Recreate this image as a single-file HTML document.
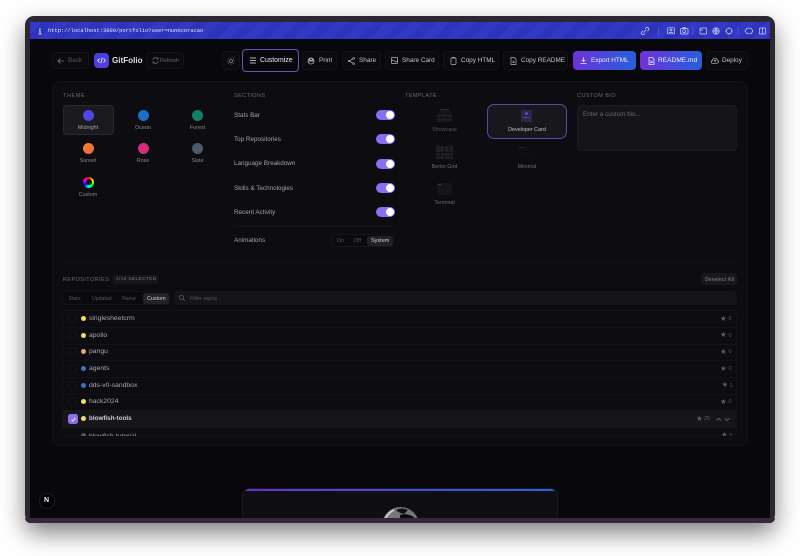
<!DOCTYPE html>
<html><head><meta charset="utf-8"><style>
html,body{margin:0;padding:0;width:800px;height:556px;overflow:hidden;background:#fff}
*{box-sizing:border-box}
body{font-family:"Liberation Sans",sans-serif;position:relative}
.a{position:absolute}
.t{position:absolute;white-space:nowrap;line-height:10px;height:10px;margin-top:1px}
.frame{position:absolute;left:25px;top:16px;width:750px;height:506.5px;border-radius:9px;background:#2c2733;box-shadow:0 10px 24px rgba(0,0,0,.5)}
.frame:after{content:"";position:absolute;left:0;right:0;bottom:0;height:5px;background:#37283f;border-radius:0 0 9px 9px}
.screen{position:absolute;left:30px;top:22px;width:740px;height:496px;background:#08080c;overflow:hidden;z-index:2}
.s{position:absolute;left:-30px;top:-22px;width:800px;height:556px}
.bar{position:absolute;left:30px;top:22px;width:740px;height:17px;background:repeating-linear-gradient(135deg,#3239c4 0 9px,#2d34bb 9px 18px)}
.btn{position:absolute;border:1px solid #131318;border-radius:4px;background:#0b0b0f;top:51px;height:19px}
.lb{font-size:6.4px;color:#c4c4c8}
.grad{position:absolute;top:51px;height:19px;border-radius:4px;background:linear-gradient(90deg,#6d32d8,#2460dc)}
.h{font-size:5.5px;letter-spacing:.42px;color:#6a6a72}
.dot{position:absolute;width:11px;height:11px;border-radius:50%}
.cap{position:absolute;width:50px;text-align:center;font-size:5.4px;color:#86868c;line-height:8px;margin-top:.5px}
.sec{font-size:6.3px;color:#a2a2a8}
.tg{position:absolute;left:376px;width:19px;height:10px;border-radius:5px;background:#8b6ff0}
.tg:after{content:"";position:absolute;right:1px;top:1px;width:8px;height:8px;border-radius:50%;background:#fff}
.thumb{position:absolute;background:#17171b}
.row{position:absolute;left:62px;width:675px;height:1px;background:#131317}
.cb{position:absolute;left:68px;width:9px;height:9px;border-radius:50%;border:1px solid #17171c}
.d{position:absolute;left:81px;width:5px;height:5px;border-radius:50%}
.name{font-size:6.8px;color:#a8a8ac;left:89px}
.cnt{font-size:5.4px;color:#5a5a60}
.st{font-size:7.5px;color:#5a5a60;margin-top:0}
svg{position:absolute;overflow:visible}
</style></head><body>
<div class="frame"></div>
<div class="screen"><div class="s">

<!-- toolbar -->
<div class="btn" style="left:52px;top:52px;width:37px;height:17px"></div>
<svg style="left:57px;top:57px" width="8" height="8" viewBox="0 0 8 8" fill="none" stroke="#77777d" stroke-width=".8"><path d="M7 4H1M3.5 1.5L1 4l2.5 2.5"/></svg>
<div class="t lb" style="left:68px;top:55px;color:#55555b">Back</div>
<div class="a" style="left:94px;top:53px;width:15px;height:15px;border-radius:4px;background:linear-gradient(135deg,#3f3fe0,#5a3de0)"></div>
<svg style="left:97px;top:57px" width="9" height="7" viewBox="0 0 9 7" fill="none" stroke="#fff" stroke-width=".8"><path d="M2.5 1.5L.7 3.5l1.8 2M6.5 1.5l1.8 2-1.8 2M5.2.8L3.8 6.2"/></svg>
<div class="t" style="left:112px;top:54.5px;font-size:8.1px;font-weight:bold;color:#dcdce0">GitFolio</div>
<div class="btn" style="left:146px;top:52px;width:38px;height:17px"></div>
<svg style="left:152px;top:57px" width="7" height="7" viewBox="0 0 7 7" fill="none" stroke="#77777d" stroke-width=".7"><path d="M.8 3A2.8 2.8 0 0 1 6 2M6.2 4A2.8 2.8 0 0 1 1 5M6 .6V2H4.6M1 6.4V5h1.4"/></svg>
<div class="t" style="left:160px;top:54.5px;font-size:5.4px;color:#66666c">Refresh</div>

<div class="btn" style="left:222px;width:18px"></div>
<svg style="left:227px;top:56.5px" width="8" height="8" viewBox="0 0 8 8" fill="none" stroke="#8a8a90" stroke-width=".7"><circle cx="4" cy="4" r="1.5"/><path d="M4 .3v1M4 6.7v1M.3 4h1M6.7 4h1M1.4 1.4l.7.7M5.9 5.9l.7.7M1.4 6.6l.7-.7M5.9 2.1l.7-.7"/></svg>

<div class="a" style="left:242px;top:49px;width:57px;height:23px;border:1px solid #6b55b5;border-radius:4px;background:#08080c"></div>
<svg style="left:250px;top:57px" width="6" height="7" viewBox="0 0 6 7" stroke="#eee" stroke-width=".8"><path d="M0 1h6M0 3.5h6M0 6h6"/></svg>
<div class="t lb" style="left:260px;top:55px;color:#ececf0;font-size:6.9px">Customize</div>

<div class="btn" style="left:302px;width:35px"></div>
<svg style="left:307px;top:56.5px" width="8" height="8" viewBox="0 0 8 8" fill="none" stroke="#b5b5ba" stroke-width=".8"><circle cx="4" cy="4" r="3"/><path d="M1 4h6M2.5 1.5h3v1.8h-3z"/></svg>
<div class="t lb" style="left:319px;top:55px">Print</div>
<div class="btn" style="left:342px;width:39px"></div>
<svg style="left:348px;top:56.5px" width="7" height="8" viewBox="0 0 7 8" fill="none" stroke="#b5b5ba" stroke-width=".7"><circle cx="1.2" cy="4" r=".8"/><circle cx="5.6" cy="1.4" r=".8"/><circle cx="5.6" cy="6.6" r=".8"/><path d="M1.9 3.6l3-1.8M1.9 4.4l3 1.8"/></svg>
<div class="t lb" style="left:359px;top:55px">Share</div>
<div class="btn" style="left:385px;width:54px"></div>
<svg style="left:391px;top:57px" width="7" height="7" viewBox="0 0 7 7" fill="none" stroke="#b5b5ba" stroke-width=".7"><rect x=".4" y=".4" width="6.2" height="6.2" rx=".8"/><path d="M.5 4.2l1.8-1.3L4.5 5l2-1.2"/></svg>
<div class="t lb" style="left:402px;top:55px">Share Card</div>
<div class="btn" style="left:443px;width:56px"></div>
<svg style="left:450px;top:56.5px" width="7" height="8" viewBox="0 0 7 8" fill="none" stroke="#b5b5ba" stroke-width=".7"><rect x="1" y="1" width="5" height="6.5" rx=".7"/><path d="M2.4 1V.4h2.2V1"/></svg>
<div class="t lb" style="left:461px;top:55px">Copy HTML</div>
<div class="btn" style="left:503px;width:65px"></div>
<svg style="left:510px;top:56.5px" width="7" height="8" viewBox="0 0 7 8" fill="none" stroke="#b5b5ba" stroke-width=".7"><path d="M1 .5h3.3L6 2.2v5.3H1zM2.3 4.2h2.4M2.3 5.7h2.4"/></svg>
<div class="t lb" style="left:521px;top:55px">Copy README</div>

<div class="grad" style="left:573px;width:63px"></div>
<svg style="left:580px;top:57px" width="7" height="7" viewBox="0 0 7 7" fill="none" stroke="#eee" stroke-width=".8"><path d="M3.5.3v4M1.8 3l1.7 1.6L5.2 3M.5 6.4h6"/></svg>
<div class="t lb" style="left:591px;top:55px;color:#f0f0f5">Export HTML</div>
<div class="grad" style="left:640px;width:62px"></div>
<svg style="left:648px;top:56.5px" width="7" height="8" viewBox="0 0 7 8" fill="none" stroke="#eee" stroke-width=".8"><path d="M1 .5h3.3L6 2.2v5.3H1zM2.3 4.2h2.4M2.3 5.7h2.4"/></svg>
<div class="t lb" style="left:658px;top:55px;color:#f4f4f8;font-size:6.6px">README.md</div>
<div class="btn" style="left:706px;width:42px"></div>
<svg style="left:711px;top:57px" width="8" height="7" viewBox="0 0 8 7" fill="none" stroke="#b5b5ba" stroke-width=".7"><path d="M2 6.3H1.5A1.3 1.3 0 0 1 1.5 3.6 2.4 2.4 0 0 1 6.2 3 1.7 1.7 0 0 1 6 6.3H2zM4 5.5V3.2M3 4l1-1 1 1"/></svg>
<div class="t lb" style="left:722px;top:55px">Deploy</div>

<!-- panel -->
<div class="a" style="left:52px;top:81px;width:696px;height:365px;border-radius:8px;background:#0c0c11;border:1px solid #121217"></div>

<div class="t h" style="left:63px;top:90px;letter-spacing:.6px">THEME</div>
<div class="a" style="left:62.5px;top:105px;width:51px;height:30px;border-radius:4px;background:#1b1b1f;border:1px solid #2a2a2e"></div>
<div class="dot" style="left:83px;top:110px;background:#4f46e5"></div>
<div class="dot" style="left:137.5px;top:110px;background:#1a6fc9"></div>
<div class="dot" style="left:192px;top:110px;background:#0f8168"></div>
<div class="dot" style="left:83px;top:143px;background:linear-gradient(135deg,#f78a2a,#ee5f3b)"></div>
<div class="dot" style="left:137.5px;top:143px;background:#d42f78"></div>
<div class="dot" style="left:192px;top:143px;background:#4d5a6c"></div>
<div class="dot" style="left:83px;top:176.5px;background:conic-gradient(#f00,#ff0,#0f0,#0ff,#00f,#f0f,#f00)"></div>
<div class="a" style="left:85.5px;top:179px;width:6px;height:6px;border-radius:50%;background:#0c0c11"></div>
<div class="cap" style="left:63px;top:123px;color:#a0a0a5">Midnight</div>
<div class="cap" style="left:118px;top:123px">Ocean</div>
<div class="cap" style="left:172.5px;top:123px">Forest</div>
<div class="cap" style="left:63px;top:156px">Sunset</div>
<div class="cap" style="left:118px;top:156px">Rose</div>
<div class="cap" style="left:172.5px;top:156px">Slate</div>
<div class="cap" style="left:63px;top:190px">Custom</div>

<div class="t h" style="left:234px;top:90px">SECTIONS</div>
<div class="t sec" style="left:234px;top:109.5px">Stats Bar</div>
<div class="t sec" style="left:234px;top:133.5px">Top Repositories</div>
<div class="t sec" style="left:234px;top:158px">Language Breakdown</div>
<div class="t sec" style="left:234px;top:182.5px">Skills &amp; Technologies</div>
<div class="t sec" style="left:234px;top:206.5px">Recent Activity</div>
<div class="tg" style="top:110px"></div>
<div class="tg" style="top:134px"></div>
<div class="tg" style="top:158.5px"></div>
<div class="tg" style="top:183px"></div>
<div class="tg" style="top:207px"></div>
<div class="a" style="left:234px;top:226px;width:161px;height:1px;background:#15151a"></div>
<div class="t sec" style="left:234px;top:235px">Animations</div>
<div class="a" style="left:331px;top:234px;width:64px;height:13px;border-radius:4px;border:1px solid #15151a;background:#0b0b0f"></div>
<div class="a" style="left:367px;top:235.5px;width:26px;height:10.5px;border-radius:3px;background:#222226"></div>
<div class="t" style="left:337px;top:235px;font-size:5.3px;color:#55555b">On</div>
<div class="t" style="left:354px;top:235px;font-size:5.3px;color:#55555b">Off</div>
<div class="t" style="left:371px;top:235px;font-size:5.5px;color:#d0d0d4">System</div>

<div class="t h" style="left:405px;top:90px">TEMPLATE</div>
<div class="a" style="left:487px;top:104px;width:80px;height:35px;border-radius:7px;background:#17171c;border:1px solid #5a4aa8"></div>
<div class="thumb" style="left:521px;top:110px;width:11px;height:12px;background:#2a2650"></div>
<div class="a" style="left:525px;top:112px;width:3px;height:3px;border-radius:50%;background:#5a50a0"></div>
<div class="a" style="left:523px;top:116.5px;width:7px;height:1px;background:#4a4480"></div>
<svg style="left:436px;top:109px" width="17" height="14" viewBox="0 0 17 14" fill="#1e1e22"><rect x="4" y="0" width="9" height="1.3" fill="#2a2a30"/><rect x="3" y="2.5" width="11" height="1"/><rect x="1" y="5" width="15" height="3"/><rect x="1" y="9" width="4.5" height="3.5"/><rect x="6.3" y="9" width="4.5" height="3.5"/><rect x="11.6" y="9" width="4.5" height="3.5"/></svg>
<svg style="left:436px;top:146px" width="17" height="13" viewBox="0 0 17 13" fill="#1f1f24"><rect x="0" y="0" width="8" height="6"/><rect x="9" y="0" width="3.5" height="6"/><rect x="13.5" y="0" width="3.5" height="6"/><rect x="0" y="7" width="4" height="2.5"/><rect x="5" y="7" width="12" height="2.5"/><rect x="0" y="10.5" width="8" height="2.5"/><rect x="9" y="10.5" width="8" height="2.5"/></svg>
<svg style="left:519px;top:147px" width="14" height="10" viewBox="0 0 14 10" fill="#17171b"><rect x="0" y="0" width="5" height=".8" fill="#2c2c32"/><rect x="0" y="2.5" width="14" height=".6"/><rect x="0" y="5" width="14" height=".6"/><rect x="0" y="7.5" width="10" height=".6"/></svg>
<div class="thumb" style="left:437px;top:183px;width:15px;height:12px;background:#161619"></div>
<div class="a" style="left:437.5px;top:183.5px;width:3px;height:1px;background:#5a3434"></div>
<div class="cap" style="left:419.5px;top:125px;color:#55555b">Showcase</div>
<div class="cap" style="left:502px;top:125px;color:#c0c0c5">Developer Card</div>
<div class="cap" style="left:419.5px;top:162px;color:#6a6a70">Bento Grid</div>
<div class="cap" style="left:502px;top:162px;color:#6a6a70">Minimal</div>
<div class="cap" style="left:419.5px;top:198px;color:#6a6a70">Terminal</div>

<div class="t h" style="left:577px;top:90px">CUSTOM BIO</div>
<div class="a" style="left:577px;top:105px;width:160px;height:46px;border-radius:4px;background:#151518;border:1px solid #1c1c20"></div>
<div class="t" style="left:583px;top:109px;font-size:6.3px;color:#6a6a70">Enter a custom bio...</div>

<div class="a" style="left:62px;top:262px;width:675px;height:1px;background:#121217"></div>

<div class="t h" style="left:63px;top:273.5px">REPOSITORIES</div>
<div class="a" style="left:112px;top:274.5px;width:47px;height:9px;border-radius:4.5px;background:#17171b"></div>
<div class="t" style="left:116px;top:273.5px;font-size:4.8px;letter-spacing:.35px;color:#77777d">4/12 SELECTED</div>
<div class="a" style="left:701px;top:273px;width:36px;height:12px;border-radius:3.5px;background:#19191d"></div>
<div class="t" style="left:705px;top:273.5px;font-size:5.2px;font-weight:bold;color:#66666c">Deselect All</div>

<div class="a" style="left:62px;top:291px;width:108px;height:14px;border-radius:4px;background:#0b0b0f;border:1px solid #141418"></div>
<div class="a" style="left:143px;top:292.5px;width:26px;height:11px;border-radius:3px;background:#232327"></div>
<div class="t" style="left:68.5px;top:292.5px;font-size:5.2px;color:#55555b">Stars</div>
<div class="t" style="left:92px;top:292.5px;font-size:5.2px;color:#55555b">Updated</div>
<div class="t" style="left:122px;top:292.5px;font-size:5.2px;color:#55555b">Name</div>
<div class="t" style="left:147px;top:292.5px;font-size:5.4px;color:#d0d0d4">Custom</div>
<div class="a" style="left:174px;top:291px;width:563px;height:14px;border-radius:4px;background:#151518"></div>
<svg style="left:179px;top:295px" width="6" height="6" viewBox="0 0 6 6" fill="none" stroke="#66666c" stroke-width=".7"><circle cx="2.5" cy="2.5" r="2"/><path d="M4 4l1.7 1.7"/></svg>
<div class="t" style="left:190px;top:292.5px;font-size:5.4px;color:#55555b">Filter repos...</div>

<!-- list -->
<div class="a" style="left:62px;top:310px;width:675px;height:126px;border-radius:5px;border:1px solid #121217;overflow:hidden"></div>
<div class="row" style="top:326.5px"></div><div class="row" style="top:343.5px"></div><div class="row" style="top:360px"></div><div class="row" style="top:376.5px"></div><div class="row" style="top:393.5px"></div>
<div class="a" style="left:62px;top:410px;width:675px;height:17px;background:#16161a"></div>
<div class="row" style="top:427px"></div>

<div class="cb" style="top:314px"></div><div class="d" style="top:316px;background:#f1e05a"></div><div class="t name" style="top:313px">singlesheetcrm</div>
<div class="cb" style="top:330.5px"></div><div class="d" style="top:332.5px;background:#f1e05a"></div><div class="t name" style="top:329.5px">apollo</div>
<div class="cb" style="top:347px"></div><div class="d" style="top:349px;background:#dea584"></div><div class="t name" style="top:346px">pangu</div>
<div class="cb" style="top:364px"></div><div class="d" style="top:366px;background:#3178c6"></div><div class="t name" style="top:363px">agents</div>
<div class="cb" style="top:380.5px"></div><div class="d" style="top:382.5px;background:#3178c6"></div><div class="t name" style="top:379.5px">dds-v0-sandbox</div>
<div class="cb" style="top:397px"></div><div class="d" style="top:399px;background:#f1e05a"></div><div class="t name" style="top:396px">hack2024</div>
<div class="a" style="left:68px;top:414px;width:9.5px;height:9.5px;border-radius:2.5px;background:#8b6ff0"></div>
<svg style="left:70.5px;top:416.5px" width="5" height="5" viewBox="0 0 5 5" fill="none" stroke="#fff" stroke-width=".9"><path d="M.6 2.8l1.3 1.3L4.4.8"/></svg>
<div class="d" style="top:416px;background:#f1e05a"></div><div class="t name" style="top:413px;color:#cfcfd3;font-weight:bold;font-size:6.3px">blowfish-tools</div>
<div class="a" style="left:62px;top:428px;width:675px;height:8px;overflow:hidden">
<div class="d" style="left:19px;top:4.5px;background:#555"></div><div class="t name" style="left:27px;top:2.5px">blowfish-tutorial</div>
<div class="t st" style="left:659px;top:1.5px">★</div><div class="t cnt" style="left:667px;top:1.5px">3</div></div>

<div class="t st" style="left:720px;top:313.5px">★</div><div class="t cnt" style="left:728.5px;top:313px">0</div>
<div class="t st" style="left:720px;top:330px">★</div><div class="t cnt" style="left:728.5px;top:329.5px">0</div>
<div class="t st" style="left:720px;top:346.5px">★</div><div class="t cnt" style="left:728.5px;top:346px">0</div>
<div class="t st" style="left:720px;top:363.5px">★</div><div class="t cnt" style="left:728.5px;top:363px">0</div>
<div class="t st" style="left:721.5px;top:380px">★</div><div class="t cnt" style="left:729.5px;top:379.5px">1</div>
<div class="t st" style="left:720px;top:396.5px">★</div><div class="t cnt" style="left:728.5px;top:396px">0</div>
<div class="t st" style="left:696px;top:413.5px">★</div><div class="t cnt" style="left:704px;top:413px">25</div>
<svg style="left:716px;top:416.5px" width="14" height="5" viewBox="0 0 14 5" fill="none" stroke="#77777d" stroke-width=".7"><path d="M.5 3.5L2.7 1.2 5 3.5M9 1.2l2.2 2.3 2.3-2.3"/></svg>

<!-- N badge -->
<div class="a" style="left:39px;top:493px;width:16px;height:16px;border-radius:50%;background:#000;border:1px solid #1c1c20"></div>
<div class="t" style="left:44px;top:495px;font-size:7px;font-weight:bold;color:#eee">N</div>

<!-- preview card -->
<div class="a" style="left:242px;top:487.5px;width:316px;height:50px;border-radius:8px;background:#0f0f13;border:1px solid #1a1a1f;overflow:hidden">
<div style="height:3px;margin-top:-1px;background:linear-gradient(90deg,#6a2fd8,#2563e0)"></div></div>
<svg style="left:381.5px;top:507px" width="37" height="37" viewBox="0 0 37 37"><circle cx="18.5" cy="18.5" r="18.5" fill="#777"/><path d="M14 3q6-3 12 0l-4 4q-5-1-8-4z" fill="#111"/><path d="M18 8q9-3 17 5v6H18z" fill="#080808"/><path d="M3 12q4-7 9-9" stroke="#ccc" fill="none" stroke-width="2"/></svg>

</div></div>

<!-- URL bar -->
<div class="bar" style="z-index:3"></div>
<div style="position:absolute;z-index:4;left:0;top:0;width:800px;height:40px">
<svg style="left:38px;top:27.5px" width="4" height="7" viewBox="0 0 4 7" fill="#d8d8f5"><circle cx="2" cy="1" r=".8"/><path d="M1 2.4h1.6v3.2H3.5v.9H.5v-.9h1V3.2H1z"/></svg>
<div class="t" style="left:48px;top:25px;font-family:'Liberation Mono',monospace;font-size:5.4px;color:#e6e6fa">http://localhost:3000/portfolio?user=nunocoracao</div>
<svg style="left:640px;top:26px" width="128" height="10" viewBox="0 0 128 10" fill="none" stroke="#d5d6f5" stroke-width=".7">
<path d="M3.5 6.5L6.5 3.5M2.8 4.8L1.8 5.8a1.7 1.7 0 0 0 2.4 2.4l1-1M5 2.8l1-1a1.7 1.7 0 0 1 2.4 2.4l-1 1"/>
<path d="M18.5 1v8" stroke="#5a60d8"/>
<rect x="27.5" y="1.8" width="7" height="6" rx="1"/><circle cx="31" cy="4" r="1"/><path d="M29 6.5h4"/>
<rect x="40.5" y="2.5" width="7.5" height="5.5" rx="1"/><circle cx="44.2" cy="5.2" r="1.5"/><path d="M42.5 2.5l.7-1h2l.7 1"/>
<path d="M53 1v8" stroke="#5a60d8"/>
<rect x="60" y="2" width="6.5" height="6" rx=".6"/><path d="M60 4h3"/>
<circle cx="76" cy="5" r="3.2"/><path d="M73 5h6M76 2q-2 3 0 6M76 2q2 3 0 6"/>
<circle cx="89" cy="5" r="2.8"/><path d="M89 1v1.2M89 7.8V9M85 5h1.2M91.8 5H93"/>
<path d="M98 1v8" stroke="#5a60d8"/>
<path d="M105 5l2-2.8h4l2 2.8-2 2.8h-4z"/>
<rect x="119.5" y="2" width="6" height="6" rx=".6"/><path d="M122.5 2v6"/>
</svg>
</div>
</body></html>
